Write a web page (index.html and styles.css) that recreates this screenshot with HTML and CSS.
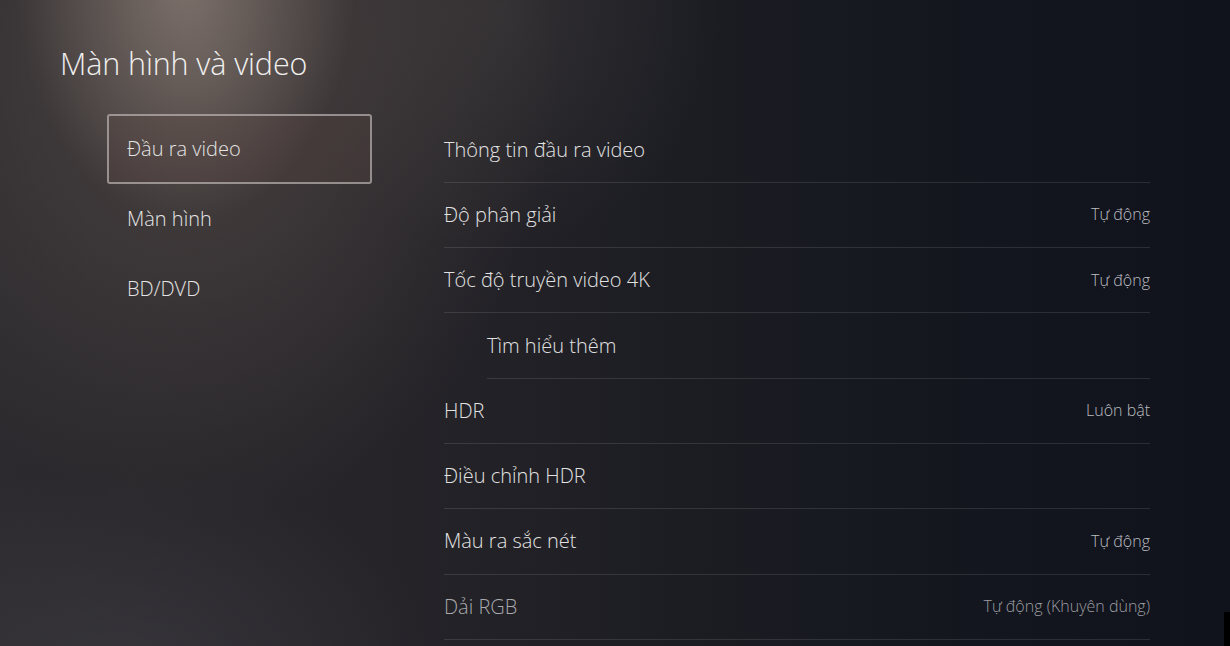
FILE: index.html
```html
<!DOCTYPE html>
<html lang="vi">
<head>
<meta charset="utf-8">
<title>Màn hình và video</title>
<link rel="stylesheet" href="styles.css">
</head>
<body>
<div class="screen">
  <h1 class="title">Màn hình và video</h1>
  <div class="content">
    <nav class="nav">
      <div class="nav-item selected">Đầu ra video</div>
      <div class="nav-item">Màn hình</div>
      <div class="nav-item">BD/DVD</div>
    </nav>
    <ul class="list">
      <li class="row"><span class="label">Thông tin đầu ra video</span></li>
      <li class="row"><span class="label">Độ phân giải</span><span class="value">Tự động</span></li>
      <li class="row"><span class="label">Tốc độ truyền video 4K</span><span class="value">Tự động</span></li>
      <li class="row sub"><span class="label">Tìm hiểu thêm</span></li>
      <li class="row"><span class="label">HDR</span><span class="value">Luôn bật</span></li>
      <li class="row"><span class="label">Điều chỉnh HDR</span></li>
      <li class="row"><span class="label">Màu ra sắc nét</span><span class="value">Tự động</span></li>
      <li class="row dim"><span class="label">Dải RGB</span><span class="value">Tự động (Khuyên dùng)</span></li>
    </ul>
  </div>
  <div class="edge"></div>
</div>
</body>
</html>
```

FILE: styles.css
```css
* { box-sizing: border-box; }
html, body { margin: 0; padding: 0; }
body {
  width: 1230px;
  height: 646px;
  overflow: hidden;
  background: #16171d;
  font-family: "Open Sans", "Noto Sans", sans-serif;
  font-weight: 300;
  color: #e6e6e6;
}
.screen {
  position: relative;
  width: 1230px;
  height: 646px;
  overflow: hidden;
  background:
    radial-gradient(ellipse 170px 240px at 185px -20px, rgba(160,145,135,0.6), rgba(160,145,135,0) 100%),
    radial-gradient(ellipse 360px 460px at 200px 60px, rgba(100,88,82,0.55), rgba(100,88,82,0) 100%),
    radial-gradient(ellipse 220px 240px at 500px 10px, rgba(80,74,72,0.35), rgba(80,74,72,0) 100%),
    radial-gradient(ellipse 320px 200px at 120px 670px, rgba(72,72,78,0.4), rgba(72,72,78,0) 100%),
    linear-gradient(to right, #2c2a2e 0%, #262429 30%, #1c1d23 55%, #13161e 80%, #10131b 100%);
}
.title {
  margin: 0;
  padding: 43px 0 0 60px;
  height: 114px;
  font-size: 30.5px;
  font-weight: 300;
  line-height: 40px;
  color: #efefef;
  letter-spacing: -0.1px;
}
.content {
  display: flex;
  align-items: flex-start;
}
.nav {
  margin-left: 107px;
  width: 265px;
  display: flex;
  flex-direction: column;
}
.nav-item {
  height: 70px;
  display: flex;
  align-items: center;
  padding: 0 0 2px 18px;
  font-size: 20px;
  color: #e4e4e4;
  border: 2px solid transparent;
  border-radius: 3px;
}
.nav-item.selected {
  border-color: rgba(200,196,196,0.62);
  background: rgba(90,70,66,0.28);
}
.list {
  list-style: none;
  margin: 3.5px 0 0 72px;
  padding: 0;
  width: 706px;
}
.row {
  height: 65.3px;
  display: flex;
  align-items: center;
  justify-content: space-between;
  padding-bottom: 1px;
  border-bottom: 1px solid rgba(255,255,255,0.11);
}
.row.sub { margin-left: 43px; }
.label {
  font-size: 20px;
  color: #e2e2e2;
}
.value {
  font-size: 16px;
  color: #bcbcc0;
}
.row.dim .label { color: #a9a9ad; }
.row.dim .value { color: #9d9da2; }
.edge {
  position: absolute;
  right: 0;
  bottom: 0;
  width: 6px;
  height: 34px;
  background: #000;
}
```
